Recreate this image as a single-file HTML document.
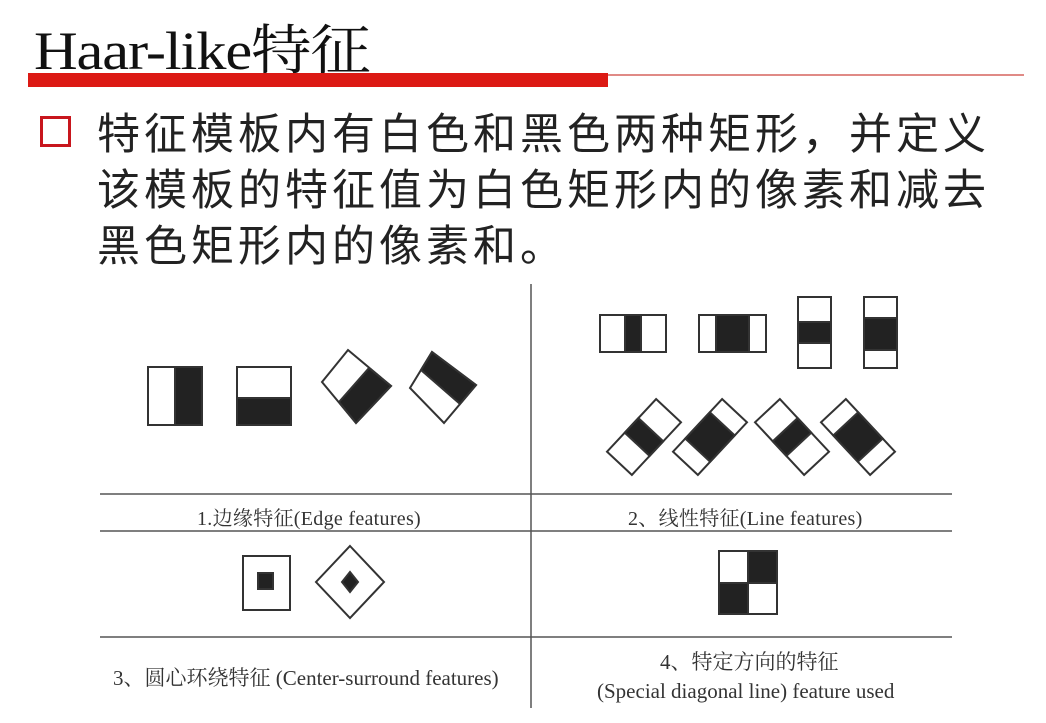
<!DOCTYPE html>
<html><head><meta charset="utf-8"><style>
body{margin:0;width:1046px;height:723px;background:#fff;overflow:hidden;position:relative;font-family:"Liberation Serif","Noto Serif CJK SC",serif}
.t{position:absolute;white-space:nowrap;color:#111}
</style></head><body>
<div class="t" style="left:34px;top:8px;font-size:54px;letter-spacing:-1px;transform:scaleX(1.12);transform-origin:0 0">Haar-like特征</div>
<div style="position:absolute;left:28px;top:73px;width:580px;height:14px;background:#dc1a14"></div>
<div style="position:absolute;left:608px;top:74px;width:416px;height:2px;background:#e08a86"></div>
<div style="position:absolute;left:40px;top:116px;width:25px;height:25px;border:3px solid #c8161d"></div>
<div class="t" style="left:97px;top:103px;font-size:43px;line-height:56px;font-family:'Noto Sans CJK SC',sans-serif;color:#222;letter-spacing:4px">特征模板内有白色和黑色两种矩形，并定义<br>该模板的特征值为白色矩形内的像素和减去<br>黑色矩形内的像素和。</div>
<svg style="position:absolute;left:0;top:0" width="1046" height="723">
<g stroke="#555" stroke-width="1.5">
<line x1="531" y1="284" x2="531" y2="708"/>
<line x1="100" y1="494" x2="952" y2="494"/>
<line x1="100" y1="531" x2="952" y2="531"/>
<line x1="100" y1="637" x2="952" y2="637"/>
</g>
<g stroke="#333" stroke-width="2" fill="#fff">
<rect x="148" y="367" width="54" height="58"/><rect x="175" y="367" width="27" height="58" fill="#222"/>
<rect x="237" y="367" width="54" height="58"/><rect x="237" y="398" width="54" height="27" fill="#222"/>
<polygon points="348,350 391,386 356,423 322,382"/><polygon points="369,368 391,386 356,423 339,402" fill="#222"/>
<polygon points="432,352 476,385 444,423 410,388"/><polygon points="421,370 432,352 476,385 460,404" fill="#222"/>
<rect x="600" y="315" width="66" height="37"/><rect x="625" y="315" width="16" height="37" fill="#222"/>
<rect x="699" y="315" width="67" height="37"/><rect x="716" y="315" width="33" height="37" fill="#222"/>
<rect x="798" y="297" width="33" height="71"/><rect x="798" y="322" width="33" height="21" fill="#222"/>
<rect x="864" y="297" width="33" height="71"/><rect x="864" y="318" width="33" height="32" fill="#222"/>
<g transform="translate(644,437) rotate(-47)"><rect x="-36" y="-17" width="72" height="34"/><rect x="-10" y="-17" width="20" height="34" fill="#222"/></g>
<g transform="translate(710,437) rotate(-47)"><rect x="-36" y="-17" width="72" height="34"/><rect x="-18" y="-17" width="36" height="34" fill="#222"/></g>
<g transform="translate(792,437) rotate(47)"><rect x="-36" y="-17" width="72" height="34"/><rect x="-10" y="-17" width="20" height="34" fill="#222"/></g>
<g transform="translate(858,437) rotate(47)"><rect x="-36" y="-17" width="72" height="34"/><rect x="-18" y="-17" width="36" height="34" fill="#222"/></g>
<rect x="243" y="556" width="47" height="54"/><rect x="258" y="573" width="15" height="16" fill="#222"/>
<polygon points="350,546 384,582 350,618 316,582"/><polygon points="350,572 358,582 350,592 342,582" fill="#222"/>
<rect x="719" y="551" width="58" height="63"/><rect x="748" y="551" width="29" height="32" fill="#222"/><rect x="719" y="583" width="29" height="31" fill="#222"/>
</g>
</svg>
<div class="t" style="left:197px;top:502px;font-size:20px;color:#333;letter-spacing:0.3px">1.边缘特征(Edge features)</div>
<div class="t" style="left:628px;top:502px;font-size:20px;color:#333;letter-spacing:0.3px">2、线性特征(Line features)</div>
<div class="t" style="left:113px;top:662px;font-size:21px;color:#333">3、圆心环绕特征 (Center-surround features)</div>
<div class="t" style="left:660px;top:646px;font-size:21px;color:#333">4、特定方向的特征</div>
<div class="t" style="left:597px;top:679px;font-size:21px;color:#333">(Special diagonal line) feature used</div>
</body></html>
